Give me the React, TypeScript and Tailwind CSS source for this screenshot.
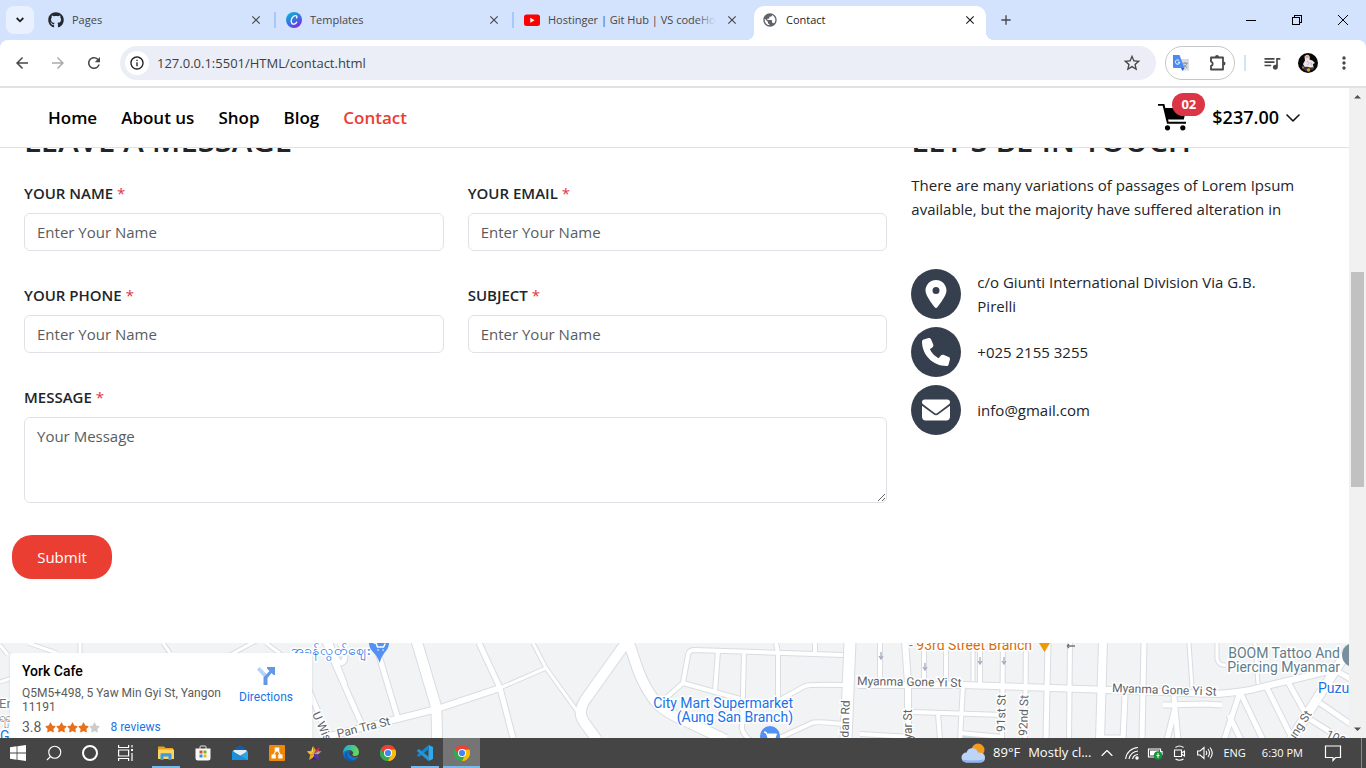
import type { ReactNode } from "react";
import { FaEnvelope, FaGithub, FaLocationDot, FaPhone, FaStar } from "react-icons/fa6";
import { BsChevronDown } from "react-icons/bs";
import {
  MdArrowBack,
  MdArrowForward,
  MdAdd,
  MdClose,
  MdInfoOutline,
  MdMoreVert,
  MdOutlineExtension,
  MdPublic,
  MdQueueMusic,
  MdRefresh,
  MdStarBorder,
} from "react-icons/md";
import { ChevronUp, Search } from "lucide-react";

/* ---------- Browser window ---------- */

function CanvaLogo() {
  return (
    <svg viewBox="0 0 16 16" className="size-4">
      <defs>
        <linearGradient id="canva" x1="0" y1="0" x2="0.7" y2="1">
          <stop offset="0" stopColor="#00c4cc" />
          <stop offset="0.5" stopColor="#2f7de0" />
          <stop offset="1" stopColor="#7d2ae8" />
        </linearGradient>
      </defs>
      <circle cx="8" cy="8" r="8" fill="url(#canva)" />
      <path
        d="M10.6 5.9c.8-1.2.1-2.5-1.4-2.3C7 3.900 5.100 6.600 5.200 9.200c.1 2 1.200 3.100 2.700 2.900 1.200-.1 2.200-.9 2.800-2"
        fill="none"
        stroke="#fff"
        strokeWidth="1.300"
        strokeLinecap="round"
      />
    </svg>
  );
}

function YouTubeLogo() {
  return (
    <svg viewBox="0 0 16 16" className="size-4">
      <rect x="0" y="2.500" width="16" height="11.500" rx="2.500" fill="#f00" />
      <path d="M6.300 5.700v5l4.300-2.500z" fill="#fff" />
    </svg>
  );
}

function Tab({ icon, title, last }: { icon: ReactNode; title: string; last?: boolean }) {
  return (
    <div
      className={
        last
          ? "flex h-4 w-[232px] items-center pl-2.5 pr-[7px]"
          : "flex h-4 w-[238px] items-center border-r-2 border-[#a8c7fa] pl-2.5 pr-[11px]"
      }
    >
      {icon}
      <span className="relative ml-2 w-[168px] overflow-hidden whitespace-nowrap text-[11px] leading-4 text-[#474747]">
        {title}
        <span className="absolute inset-y-0 right-0 w-5 bg-linear-to-r from-transparent to-[#d3e2fd]" />
      </span>
      <button aria-label={`Close ${title}`} className="ml-auto text-[#474747]">
        <MdClose className="size-3.5" />
      </button>
    </div>
  );
}

function TabStrip() {
  return (
    <div className="flex h-10 items-center bg-[#d3e2fd]">
      <button
        aria-label="Search tabs"
        className="ml-1.5 flex size-7 items-center justify-center rounded-lg bg-[#e9f1fe] text-[#1f1f1f]"
      >
        <svg viewBox="0 0 8 6" className="h-1.5 w-2" fill="none" stroke="currentColor" strokeWidth="1.800">
          <path d="M.7 1 4 4.300 7.300 1" />
        </svg>
      </button>
      <div className="flex items-center pl-1">
        <Tab icon={<FaGithub className="size-4 shrink-0 text-[#24292f]" />} title="Pages" />
        <Tab icon={<CanvaLogo />} title="Templates" />
        <Tab icon={<YouTubeLogo />} title="Hostinger | Git Hub | VS codeHo" last />
      </div>
      <div className="flex self-end">
        <span className="size-2 self-end bg-[radial-gradient(circle_at_0_0,#d3e2fd_8px,#fff_8px)]" />
        <div className="flex h-[34px] w-[232px] items-center rounded-t-[10px] bg-white pb-1.5 pl-2 pr-[9px]">
          <MdPublic className="size-4 text-[#5f6368]" />
          <span className="ml-2 text-[11px] leading-4 text-[#1f1f1f]">Contact</span>
          <button aria-label="Close Contact" className="ml-auto text-[#1f1f1f]">
            <MdClose className="size-3.5" />
          </button>
        </div>
        <span className="size-2 self-end bg-[radial-gradient(circle_at_100%_0,#d3e2fd_8px,#fff_8px)]" />
      </div>
      <button aria-label="New tab" className="ml-1 text-[#474747]">
        <MdAdd className="size-4" />
      </button>
      <div className="ml-auto flex text-black">
        <button aria-label="Minimize" className="flex h-10 w-[46px] items-center justify-center">
          <span className="h-px w-2.5 bg-black" />
        </button>
        <button aria-label="Restore" className="flex h-10 w-[46px] items-center justify-center">
          <svg viewBox="0 0 10 10" className="size-2.5" fill="none" stroke="currentColor" shapeRendering="crispEdges">
            <path d="M.5 2.500h7v7h-7zM2.500 2.500v-2h7v7h-2" />
          </svg>
        </button>
        <button aria-label="Close window" className="flex h-10 w-[46px] items-center justify-center">
          <svg viewBox="0 0 10 10" className="size-2.5" fill="none" stroke="currentColor">
            <path d="m0 0 10 10M10 0 0 10" />
          </svg>
        </button>
      </div>
    </div>
  );
}

function TranslateIcon() {
  return (
    <svg viewBox="0 0 16 16" className="size-4">
      <path d="M6.500 4H16v11.500H9.500z" fill="#dadce0" />
      <path
        d="M9.700 8.200h5M12.200 7v1.200M14 8.200c-.5 2-2 3.500-3.600 4.400M10.900 9.600c.7 1.300 1.800 2.400 3.300 3.200"
        stroke="#6d8ba8"
        strokeWidth=".9"
        fill="none"
      />
      <path d="M0 0h6.500L11.500 13H1a1 1 0 0 1-1-1z" fill="#4a8af4" />
      <path d="M8 13h3.500L9.500 16z" fill="#2f58c9" />
      <path d="M6.200 5.500A2.200 2.200 0 1 0 6.800 7.200H4.900" fill="none" stroke="#fff" strokeWidth="1" />
    </svg>
  );
}

function ExtensionIcon() {
  return (
    <svg viewBox="0 0 18 18" className="size-[18px]">
      <path
        d="M2 3.500h12v12H2v-3.600a2.200 2.200 0 0 0 0-4.300z"
        fill="none"
        stroke="currentColor"
        strokeWidth="1.800"
        strokeLinejoin="round"
      />
      <path d="M6 3a2 2 0 0 1 4 0zM14.500 7.500a2 2 0 0 1 0 4z" fill="currentColor" />
    </svg>
  );
}

function Avatar() {
  return (
    <svg viewBox="0 0 20 20" className="size-5">
      <circle cx="10" cy="10" r="10" fill="#080808" />
      <path d="M6.500 3.500Q9 .5 11.500 3q.5 2 0 3.500 3 .3 5.500 3.500l-2 1 .5 3.500-3.500.2-3-1-2.500.3L5 11l2-3.500z" fill="#eee4e8" />
      <path d="M7 3.300q2-2 4-.3l-.5 2-2.500.6z" fill="#dba79a" />
      <path d="m4 12 3 2 5 .8 4-.3-1 2.500-4-.5-3 1.500-3-2z" fill="#3a3440" />
      <path d="m9 8 2 2.500-1.500 1.500M13 9.500l1 2.500" stroke="#b79aa8" strokeWidth=".8" fill="none" />
      <circle cx="10.500" cy="17" r="1.800" fill="#d69b20" />
      <circle cx="5" cy="14.500" r=".9" fill="#b98828" />
      <circle cx="15" cy="14.500" r=".8" fill="#3f78a0" />
    </svg>
  );
}

function Toolbar() {
  return (
    <div className="bg-[#d3e2fd]">
      <div className="flex h-[46px] items-center rounded-t-lg bg-white text-[#474747]">
        <button aria-label="Back" className="ml-[13px]">
          <MdArrowBack className="size-[18px]" />
        </button>
        <button aria-label="Forward" className="ml-[18px] text-[#ababab]">
          <MdArrowForward className="size-[18px]" />
        </button>
        <button aria-label="Reload" className="ml-[18px]">
          <MdRefresh className="size-[18px]" />
        </button>
        <div className="ml-[17px] flex h-[34px] min-w-0 flex-1 items-center rounded-full bg-[#ebeef7] pl-[5px] pr-3.5">
          <span className="flex size-6 items-center justify-center rounded-full bg-white text-[#1f1f1f]">
            <MdInfoOutline className="size-4" />
          </span>
          <input
            aria-label="Address"
            defaultValue="127.0.0.1:5501/HTML/contact.html"
            className="ml-[7px] min-w-0 flex-1 bg-transparent px-px text-[13px] leading-5 text-[#3c4043] outline-none"
          />
          <button aria-label="Bookmark">
            <MdStarBorder className="size-5" />
          </button>
        </div>
        <div className="ml-[9px] flex h-[34px] w-[70px] items-center justify-between rounded-full border border-[#c7c7c7] px-[7px]">
          <TranslateIcon />
          <button aria-label="Extensions">
            <ExtensionIcon />
          </button>
        </div>
        <span className="ml-[9px] h-4 w-0.5 bg-[#d3e2fd]" />
        <button aria-label="Media" className="ml-4">
          <MdQueueMusic className="size-5" />
        </button>
        <button aria-label="Profile" className="ml-4">
          <Avatar />
        </button>
        <button aria-label="Menu" className="ml-4 mr-3">
          <MdMoreVert className="size-5" />
        </button>
      </div>
      <div className="h-0.5 bg-[#e1e2e3]" />
    </div>
  );
}

/* ---------- Contact page ---------- */

function CartIcon() {
  return (
    <svg viewBox="0 1 30 28" className="h-7 w-[30px]">
      <path d="M0 1.700h5.500L9.800 19.800H28" fill="none" stroke="#000" strokeWidth="2" />
      <path d="M6 5h22.500L25.800 16.500H8.800z" />
      <circle cx="9.500" cy="24.800" r="2.600" />
      <circle cx="24.800" cy="24.800" r="2.600" />
    </svg>
  );
}

function SiteNav() {
  return (
    <header className="relative z-10 flex h-[60px] items-center border-b border-[#dee2e6] bg-white px-12 text-[17px] font-semibold text-black">
      <nav className="flex gap-6">
        <a href="#home">Home</a>
        <a href="#about">About us</a>
        <a href="#shop">Shop</a>
        <a href="#blog">Blog</a>
        <a href="#contact" className="text-[#eb3e32]">
          Contact
        </a>
      </nav>
      <a href="#cart" aria-label="Cart, 2 items" className="relative ml-auto">
        <CartIcon />
        <span className="absolute -top-[11px] left-3.5 flex h-[23px] w-[33px] items-center justify-center rounded-full bg-[#dc3545] text-[13px] font-bold leading-4 text-white">
          02
        </span>
      </a>
      <button className="ml-6 flex items-center gap-1.5 text-[18px]">
        $237.00 <BsChevronDown className="size-4" strokeWidth={0.6} />
      </button>
    </header>
  );
}

const FIELDS = [
  { id: "name", label: "YOUR NAME" },
  { id: "email", label: "YOUR EMAIL" },
  { id: "phone", label: "YOUR PHONE" },
  { id: "subject", label: "SUBJECT" },
];

function FieldLabel({ id, text }: { id: string; text: string }) {
  return (
    <label htmlFor={id} className="mb-2 block text-[15px] font-semibold leading-6">
      {text} <span className="font-normal text-[#dc3545]">*</span>
    </label>
  );
}

function ContactForm() {
  return (
    <form className="w-2/3 pl-3 pr-3">
      <h2 className="mb-[22px] px-3 text-[31px] font-semibold leading-[38px]">LEAVE A MESSAGE</h2>
      <div className="grid grid-cols-2 gap-x-6 gap-y-8 pl-3">
        {FIELDS.map((f) => (
          <div key={f.id}>
            <FieldLabel id={f.id} text={f.label} />
            <input
              id={f.id}
              placeholder="Enter Your Name"
              className="block h-[38px] w-full rounded-md border border-[#dee2e6] px-3 text-[15px] leading-6 placeholder:text-[#595c5f]"
            />
          </div>
        ))}
        <div className="col-span-2">
          <FieldLabel id="message" text="MESSAGE" />
          <textarea
            id="message"
            placeholder="Your Message"
            className="block h-[86px] w-full rounded-md border border-[#dee2e6] px-3 py-1.5 text-[15px] leading-6 placeholder:text-[#595c5f]"
          />
        </div>
      </div>
      <button type="button" className="mt-8 h-11 w-[100px] rounded-[20px] bg-[#eb3e32] text-[15px] text-white">
        Submit
      </button>
    </form>
  );
}

const DETAILS = [
  { icon: <FaLocationDot className="size-7" />, text: "c/o Giunti International Division Via G.B. Pirelli" },
  { icon: <FaPhone className="size-7" />, text: "+025 2155 3255" },
  { icon: <FaEnvelope className="size-7" />, text: "info@gmail.com" },
];

function ContactInfo() {
  return (
    <section className="w-1/3 px-3">
      <h2 className="mb-[14px] text-[31px] font-semibold leading-[38px]">LET'S BE IN TOUCH</h2>
      <p className="mb-12 text-[15px] leading-6">
        There are many variations of passages of Lorem Ipsum available, but the majority have suffered alteration in
      </p>
      <ul className="space-y-2">
        {DETAILS.map((d) => (
          <li key={d.text} className="flex items-center gap-4">
            <span className="flex size-[50px] shrink-0 items-center justify-center rounded-full bg-[#363f4d] text-white">
              {d.icon}
            </span>
            <span className="max-w-[310px] text-[15px] leading-6">{d.text}</span>
          </li>
        ))}
      </ul>
    </section>
  );
}

/* ---------- Map ---------- */

const ROADS: { d: string; w: number }[] = [
  { w: 3, d: "M533 0 546 25 577 68M500 45 546 25M1189 0 1192 44M1217 0V16Q1219 23 1226 22M1255 0 1258 41M973 0V38" },
  { w: 3, d: "M80 0V10M28 0 57 10M163 0 170 10M230 12 256-2M0 2 8 12M0 39 12 35M266 0 282 12" },
  { w: 5, d: "M322-8 362 82M374-4 398 76M479 0 500 45 513 95M306 40 330 98M330 0Q338 24 343 19T340 0M327-4 345 42" },
  { w: 6, d: "M326 94 393 77 437 66 500 45" },
  { w: 10, d: "M416-4 435 60Q437 66 437 95" },
  { w: 10, d: "M630-6 588 53Q576 68 584 79L597 97M627-6 638 27Q645 45 655 58 665 70 690 80L726 97" },
  { w: 4, d: "M843 12 694 7Q689 7 688 12L683 40 667 54M683 40 740 56M718 8 715 49M744 10 742 85Q742 90 750 97M776 0 778 10V58L805 43Q809 41 843 42M815 0V10M775 97 812 80Q816 78 842 81M860 91 912 94" },
  { w: 11, d: "M850-2 846 97" },
  { w: 6, d: "M905-2 908 40V97M858 42 963 42 1110 47M1110 47 1217 51Q1240 49 1250 47L1333 27" },
  { w: 4, d: "M880 0V38M924 0V38M946 0V40M980 0V40M963 42 960 97M1003 0 1002 97M913 69 1003 72M938 70 940 97M960 90 1003 94M1026 0 1025 97M1070 0 1069 97" },
  { w: 5, d: "M1048 0 1046 97M1144 0 1142 97M1125 52 1123 97M1104 95H1123M1163 62 1205 61 1222 62M1174 53 1175 65 1167 97M1175 65 1178 97M1240 49 1224 97M1240 49 1263 97M1229 72 1241 97M1267 45 1293 97M1288 39 1308 75 1335 92M1320 60 1352 82M1337 28 1352 37" },
  { w: 8, d: "M1103-2 1100 97" },
  { w: 9, d: "M1350 5 1334 29 1289 100" },
];

function StreetMap() {
  return (
    <svg viewBox="0 0 1349 95" preserveAspectRatio="xMidYMin slice" className="block size-full">
      <rect width="1349" height="95" fill="#f1f3f4" />
      <path d="M961 93h42v2h-42z" fill="#b8e2c4" />
      <g fill="none" stroke="#d9dce1" strokeLinejoin="round">
        {ROADS.map((r) => (
          <path key={r.d} d={r.d} strokeWidth={r.w + 2} />
        ))}
      </g>
      <g fill="none" stroke="#fff" strokeLinejoin="round">
        {ROADS.map((r) => (
          <path key={r.d} d={r.d} strokeWidth={r.w} />
        ))}
      </g>
      <g fill="none" stroke="#a5abc0" strokeWidth="1.300">
        <path d="M881 9v7m-2-3 2 3 2-3M925 20v7m-2-3 2 3 2-3M980 14v7m-2-3 2 3 2-3M1004 14v7m-2-3 2 3 2-3" />
        <path d="M1067 3h8m-8 0 2-2m-2 2 2 2" stroke="#777" />
      </g>
      <g fill="#5f6368" stroke="#fff" strokeWidth="3" paintOrder="stroke" fontSize="12" className="font-[Roboto]">
        <text transform="translate(312 71) rotate(66)">U Wisara Rd</text>
        <text transform="translate(338 95) rotate(-14)">Pan Tra St</text>
        <text transform="translate(857 42) rotate(1)">Myanma Gone Yi St</text>
        <text transform="translate(1112 49) rotate(2)">Myanma Gone Yi St</text>
        <text transform="translate(848 110) rotate(-88)">wedan Rd</text>
        <text transform="translate(912 103) rotate(-90)">ayar St</text>
        <text transform="translate(1005 89) rotate(-89)">91st St</text>
        <text transform="translate(1027 93) rotate(-88)">92nd St</text>
        <text transform="translate(1290 105) rotate(-57)">aung St</text>
        <text transform="translate(1325 94) rotate(25)">100</text>
      </g>
      <g stroke="#fff" strokeWidth="3" paintOrder="stroke" fontSize="14" className="font-[Roboto]">
        <g fill="#1a73e8">
          <text x="291" y="12" fontSize="14">အခန်လွတ်ဈေး</text>
          <text x="793" y="65" textAnchor="end">City Mart Supermarket</text>
          <text x="793" y="79" textAnchor="end">(Aung San Branch)</text>
          <text x="1318" y="50">Puzu</text>
          <text x="0" y="98">G</text>
        </g>
        <text x="909" y="7" fill="#d56e0c">- 93rd Street Branch</text>
        <g fill="#607d8b">
          <text x="1340" y="15" textAnchor="end">BOOM Tattoo And</text>
          <text x="1340" y="29" textAnchor="end">Piercing Myanmar</text>
          <text x="-1" y="65" fontSize="13">En</text>
        </g>
        <text x="-1" y="79" fill="#80868b" fontSize="12">ရရှ</text>
      </g>
      <path d="M369 0h20q0 5-4 9-4 5-5.500 11Q378 14 373 9q-4-4-4-9z" fill="#5491f5" />
      <path d="M374 0h2l1.500 4h6l1.500-3M378 7h.1M383 7h.1" fill="none" stroke="#fff" strokeWidth="1.500" strokeLinecap="round" />
      <circle cx="770" cy="93" r="10" fill="#5491f5" />
      <path d="M764 89h2l2 6h7l1.500-4h-9z" fill="#fff" stroke="#fff" />
      <path d="M1039 0h11l-5.500 9z" fill="#f29900" />
      <circle cx="1354" cy="12" r="12" fill="#78909c" />
    </svg>
  );
}

function MapSection() {
  return (
    <section className="relative mt-16 min-h-0 flex-1 overflow-hidden">
      <StreetMap />
      <div className="absolute left-2.5 top-2.5 flex h-[120px] w-[302px] rounded-sm bg-white px-3 py-2.5 font-[Roboto] text-[12px] leading-[14px] text-[#5b5b5b] shadow-sm">
        <div className="w-[210px]">
          <h3 className="mb-[7px] text-[14px] font-medium leading-4 text-black">York Cafe</h3>
          <p className="mb-1.5">
            Q5M5+498, 5 Yaw Min Gyi St, Yangon
            <br />
            11191
          </p>
          <p className="flex items-center">
            <span className="text-[14px]">3.8</span>
            <span className="ml-1 flex text-[11px] text-[#e7711b]">
              <FaStar />
              <FaStar />
              <FaStar />
              <FaStar />
              <FaStar className="text-[#ccc]" />
            </span>
            <a href="#reviews" className="ml-2.5 text-[#1a73e8]">
              8 reviews
            </a>
          </p>
        </div>
        <a href="#directions" className="flex flex-1 flex-col items-center gap-1 pt-[3px] text-[#1a73e8]">
          <svg viewBox="0 0 20 20" className="size-5">
            <path d="M1 3.500 3.500 1 11 8.500 8.500 12z" fill="#b7d1f6" />
            <path d="M7.500 19v-7.500L13.500 5 11 2.500 11 1h8v8l-1.500 0-2-2L11.500 12v7z" fill="#6199e6" />
          </svg>
          Directions
        </a>
      </div>
    </section>
  );
}

function Scrollbar() {
  return (
    <div className="flex w-[17px] shrink-0 flex-col items-center bg-[#f1f1f1]">
      <svg viewBox="0 0 17 17" className="size-[17px]" fill="#505050">
        <path d="M5 10.500 8.500 7l3.500 3.500z" />
      </svg>
      <div className="grow-[167]" />
      <div className="w-[13px] grow-[215] bg-[#c1c1c1]" />
      <div className="grow-[234]" />
      <svg viewBox="0 0 17 17" className="size-[17px]" fill="#505050">
        <path d="M5 6.500 8.500 10 12 6.500z" />
      </svg>
    </div>
  );
}

/* ---------- Taskbar ---------- */

function WindowsLogo() {
  return (
    <svg viewBox="0 0 16 16" className="size-4" fill="#fff">
      <path d="M0 2.300 6.600 1.300v6.300H0zM7.400 1.200 16 0v7.600H7.400zM0 8.400h6.600v6.300L0 13.700zM7.400 8.400H16V16l-8.600-1.200z" />
    </svg>
  );
}

function ChromeLogo() {
  return (
    <svg viewBox="0 0 16 16" className="size-4">
      <path d="M8 8 1.070 4A8 8 0 0 1 14.930 4z" fill="#ea4335" />
      <path d="M8 8 14.930 4A8 8 0 0 1 8 16z" fill="#fbbc04" />
      <path d="M8 8v8A8 8 0 0 1 1.070 4z" fill="#34a853" />
      <path d="M8 4.300h6.930A8 8 0 0 1 8 16l3.400-6z" fill="#fbbc04" />
      <path d="M1.070 4 4.600 10 8 11.800 11.300 9.800 8 16A8 8 0 0 1 1.070 4z" fill="#34a853" />
      <path d="M1.070 4A8 8 0 0 1 14.930 4L15 4.400H8L4.500 9.800z" fill="#ea4335" />
      <circle cx="8" cy="8" r="4" fill="#fff" />
      <circle cx="8" cy="8" r="3.100" fill="#4285f4" />
    </svg>
  );
}

function ExplorerIcon() {
  return (
    <svg viewBox="0 0 16 16" className="size-4">
      <path d="M0 1.500h6L7.500 3H15v5H0z" fill="#e8a317" />
      <path d="M0 4.500h16V14H0z" fill="#fcd462" />
      <path d="M2.500 15V9.200q0-1 1-1h9q1 0 1 1V15h-3v-3.500h-5V15z" fill="#3f9bde" />
    </svg>
  );
}

function StoreIcon() {
  return (
    <svg viewBox="0 0 16 16" className="size-4">
      <path d="M5 4V2q0-1 1-1h4q1 0 1 1v2" fill="none" stroke="#e5e5e5" />
      <path d="M.5 3.500h15V13q0 2.500-2.500 2.500H3Q.5 15.500.5 13z" fill="#f7f7f7" />
      <path d="M4.500 5.500h3v3h-3z" fill="#e74c26" />
      <path d="M8.500 5.500h3v3h-3z" fill="#7ab51d" />
      <path d="M4.500 9.500h3v3h-3z" fill="#1b9de2" />
      <path d="M8.500 9.500h3v3h-3z" fill="#f8b517" />
    </svg>
  );
}

function MailIcon() {
  return (
    <svg viewBox="0 0 16 16" className="size-4">
      <path d="M0 6 8 0l8 6v3H0z" fill="#0f5ea8" />
      <path d="M1.500 5h13v2L8 11 1.500 7z" fill="#e9edf1" />
      <path d="M0 6l8 5 8-5v9H0z" fill="#28a8ea" />
      <path d="M0 6l16 9H0z" fill="#1a8fdb" />
    </svg>
  );
}

function DrawIoIcon() {
  return (
    <svg viewBox="0 0 16 16" className="size-4">
      <rect width="16" height="16" rx="1" fill="#f08705" />
      <path d="M8 4 4 11M8 4l4 7" stroke="#fff" strokeWidth="1.200" />
      <path d="M5.700 2.500h4.600v4H5.700zM2.500 9.500h4.300v4H2.500zM9.200 9.500h4.300v4H9.200z" fill="#fff" />
    </svg>
  );
}

function StarAppIcon() {
  return (
    <svg viewBox="0 0 16 16" className="size-4">
      <path d="M7 1 5.200 6 8 9z" fill="#f7e04e" />
      <path d="M7 1l1 8 2-3.500z" fill="#f09a2b" />
      <path d="M.8 6.300 5.200 6 8 9l-3.800.8z" fill="#f9c22e" />
      <path d="M9.500 6 13.500 2 12.500 6.500 8 9z" fill="#d8344a" />
      <path d="M12.300 6.300h3.200L12 9.600 8 9z" fill="#a9a9a9" />
      <path d="M4.200 9.800 3 15l5-3V9z" fill="#f3a51c" />
      <path d="M12 9.600 13.500 15 8 12V9z" fill="#5c32a8" />
      <path d="M8 11 5.500 15.500 8 14l2.500 1.500z" fill="#3c1f8c" />
    </svg>
  );
}

function EdgeIcon() {
  return (
    <svg viewBox="0 0 16 16" className="size-4">
      <defs>
        <linearGradient id="edge-top" x1="0" y1="0" x2="1" y2="0.300">
          <stop offset="0" stopColor="#1aa7e0" />
          <stop offset="1" stopColor="#62d957" />
        </linearGradient>
      </defs>
      <path d="M0 8a8 8 0 0 0 12.500 6.600Q15 13 15.300 11.500 10.500 13.500 7 10.500 5 8.500 7 6 3.500 3.500 0 8z" fill="#1472c8" />
      <path d="M0 8A8 8 0 0 1 16 7q0 4-4 4-3 0-2.500-1.700Q10.500 8 10 7 8.500 4.500 5 5 1.500 5.500 0 8z" fill="url(#edge-top)" />
      <path d="M5.500 6.500Q3 9 5 12q2 3 6 3.500Q6 17.500 3 14 .5 10.500 3 7.500 4 6.500 5.500 6.500z" fill="#0d5cab" />
    </svg>
  );
}

function VsCodeIcon() {
  return (
    <svg viewBox="0 0 16 16" className="size-4">
      <path d="M11.500 0 16 2v12l-4.500 2z" fill="#2fa8ee" />
      <path d="m11.500 0 .5 4L2 12 .2 10.700v-.9z" fill="#1585cc" />
      <path d="m11.500 16 .5-4L2 4 .2 5.300v.9z" fill="#2196dd" />
    </svg>
  );
}

function TaskViewIcon() {
  return (
    <svg viewBox="0 0 16 16" className="size-4" fill="none" stroke="#fff" strokeWidth="1.200">
      <path d="M.6 0v2.500h10V0M.6 16v-2.500h10V16M.6 5h10v6H.6zM14 0v2.500M14 8v8" />
      <path d="M13 4h2v2h-2z" fill="#fff" stroke="none" />
    </svg>
  );
}

const PINNED: { name: string; icon: ReactNode; state?: "open" | "active" }[] = [
  { name: "File Explorer", icon: <ExplorerIcon />, state: "open" },
  { name: "Store", icon: <StoreIcon /> },
  { name: "Mail", icon: <MailIcon /> },
  { name: "draw.io", icon: <DrawIoIcon /> },
  { name: "Star", icon: <StarAppIcon /> },
  { name: "Edge", icon: <EdgeIcon /> },
  { name: "Chrome", icon: <ChromeLogo /> },
  { name: "Code", icon: <VsCodeIcon />, state: "open" },
  { name: "Chrome window", icon: <ChromeLogo />, state: "active" },
];

const STATE_CLASS = {
  none: "flex h-full w-[37px] items-center justify-center",
  open: "flex h-full w-[37px] items-center justify-center bg-[linear-gradient(#76b9ed,#76b9ed)] bg-[length:28px_2px] bg-bottom bg-no-repeat",
  active:
    "flex h-full w-[37px] items-center justify-center border-b-2 border-t-2 border-b-[#76b9ed] border-t-[#757575] bg-[#757575]",
};

function Taskbar() {
  return (
    <footer className="flex h-[30px] shrink-0 items-center bg-[#454545] text-[12px] text-white">
      <button aria-label="Start" className="flex w-9 justify-center">
        <WindowsLogo />
      </button>
      <button aria-label="Search" className="flex w-9 justify-center">
        <Search className="size-[18px] -scale-x-100" strokeWidth={1.5} />
      </button>
      <button aria-label="Cortana" className="flex w-9 justify-center">
        <span className="size-4 rounded-full border-2 border-white" />
      </button>
      <button aria-label="Task view" className="mr-[3px] flex w-9 justify-center">
        <TaskViewIcon />
      </button>
      {PINNED.map((p) => (
        <button key={p.name} aria-label={p.name} className={STATE_CLASS[p.state ?? "none"]}>
          {p.icon}
        </button>
      ))}
      <div className="ml-auto flex h-full items-center">
        <button className="flex items-center gap-2 text-[13px]">
          <svg viewBox="0 0 24 20" className="h-5 w-6">
            <circle cx="17" cy="7" r="6.500" fill="#f49b1c" />
            <path d="M5.500 19.500a5 5 0 0 1 0-10 6 6 0 0 1 11.500 0q7 0 7 5 0 5-5 5z" fill="#bcd4f8" />
            <path d="M5.500 19.500a5 5 0 0 1-4.500-3q10 2 22 0-1 3-4 3z" fill="#8fb2ee" />
          </svg>
          <span>89°F</span>
          <span>Mostly cl...</span>
        </button>
        <button aria-label="Hidden icons" className="ml-1.5">
          <ChevronUp className="size-5" strokeWidth={1.4} />
        </button>
        <svg viewBox="0 0 14 14" className="ml-2 size-3.5" fill="none" stroke="#fff" strokeWidth="1.100">
          <path d="M.6 13A13 13 0 0 1 13 1.500M4 13a9.500 9.500 0 0 1 9-8M7.500 13A6 6 0 0 1 13 8.500" />
          <circle cx="12" cy="12" r="1.200" fill="#fff" />
        </svg>
        <svg viewBox="0 0 16 14" className="ml-2 h-3.5 w-4">
          <path d="M1.500 3h12v8h-12zM14 5.500h1v3h-1" fill="none" stroke="#fff" strokeWidth="1.200" />
          <path d="M3 4.500h9v5H3z" fill="#fff" />
          <circle cx="11" cy="9.500" r="4.300" fill="#15923a" />
          <path d="M11 7v5M9.500 9.500h3" stroke="#fff" />
        </svg>
        <svg viewBox="0 0 14 16" className="ml-2.5 h-4 w-3.5" fill="none" stroke="#fff" strokeWidth="1.100">
          <path d="M1.500 5h7v6.500h-7zM8.500 8l3-2v5l-3-2M2.500 2.500Q6.500-.5 10.500 2.500M2.500 14q4 2.500 8 0" />
        </svg>
        <svg viewBox="0 0 16 14" className="ml-2.5 h-3.5 w-4" fill="none" stroke="#fff" strokeWidth="1.100">
          <path d="M.6 5h2.500L7 1.500v11L3.100 9H.6zM9 5q1.500 2 0 4M11 3q3 4 0 8M13 1.500q4.500 5.500 0 11" />
        </svg>
        <span className="ml-2.5 text-[11px]">ENG</span>
        <span className="ml-4 text-[11px]">6:30 PM</span>
        <button aria-label="Notifications" className="ml-[21px] mr-[19px]">
          <svg viewBox="0 0 18 18" className="size-[18px]" fill="none" stroke="#fff" strokeWidth="1.200">
            <path d="M1.500 2h15v11.500h-5L9 16.500l0-3H1.500z" />
          </svg>
        </button>
        <span className="mr-1 h-full w-px bg-[#8a8a8a]" />
      </div>
    </footer>
  );
}

export default function App() {
  return (
    <div className="flex h-screen flex-col overflow-hidden bg-white font-['Open_Sans','Noto_Sans',sans-serif] text-[#212529]">
      <TabStrip />
      <Toolbar />
      <div className="flex min-h-0 flex-1">
        <main className="flex min-w-0 flex-1 flex-col">
          <SiteNav />
          <div className="-mt-[27px] flex">
            <ContactForm />
            <ContactInfo />
          </div>
          <MapSection />
        </main>
        <Scrollbar />
      </div>
      <Taskbar />
    </div>
  );
}
